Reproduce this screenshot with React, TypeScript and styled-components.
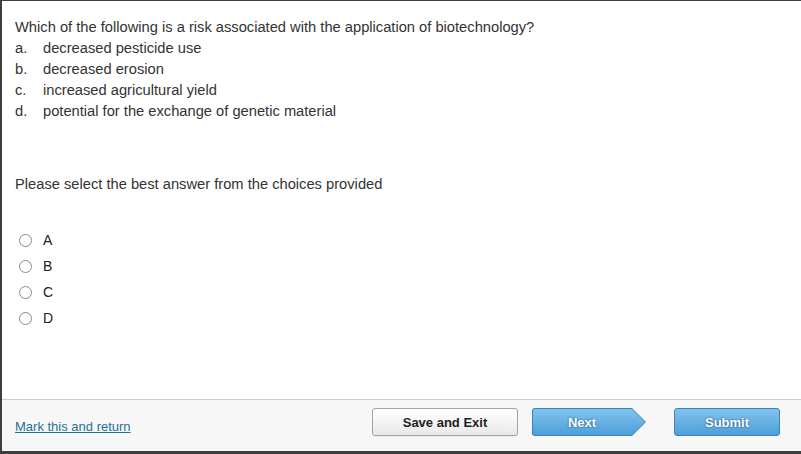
import React from "react";
import styled, { createGlobalStyle } from "styled-components";

const GlobalStyle = createGlobalStyle`
  html, body {
    margin: 0;
    padding: 0;
    background: #ffffff;
  }
  body {
    font-family: "Liberation Sans", Arial, sans-serif;
  }
`;

const Frame = styled.div`
  width: 801px;
  height: 454px;
  box-sizing: border-box;
  border-top: 1px solid #3e3e3e;
  border-left: 2px solid #3e3e3e;
  border-bottom: 3px solid #3e3e3e;
  display: flex;
  flex-direction: column;
  background: #fff;
  color: #333;
  font-size: 14.7px;
`;

const Content = styled.div`
  flex: 1;
  padding: 16px 13px 0;
`;

const Question = styled.p`
  margin: 0;
  line-height: 21px;
`;

const ChoiceList = styled.ol`
  list-style: none;
  margin: 0;
  padding: 0;
`;

const ChoiceItem = styled.li`
  display: flex;
  line-height: 21px;
`;

const ChoiceLetter = styled.span`
  width: 28px;
  flex: none;
`;

const Prompt = styled.p`
  margin: 52px 0 0;
  line-height: 21px;
`;

const RadioGroup = styled.div`
  margin-top: 32px;
  display: flex;
  flex-direction: column;
`;

const RadioRow = styled.label`
  display: flex;
  align-items: center;
  height: 26px;
  cursor: pointer;
  font-size: 14px;
`;

const RadioCircle = styled.span`
  width: 13px;
  height: 13px;
  box-sizing: border-box;
  border: 1px solid #8a8a8a;
  border-radius: 50%;
  background: #fff;
  margin-left: 4px;
  margin-right: 11px;
`;

const RadioText = styled.span`
  color: #222;
`;

const Footer = styled.div`
  height: 52px;
  box-sizing: border-box;
  border-top: 1px solid #cfcfcf;
  background: #f7f7f7;
  display: flex;
  align-items: flex-start;
  padding: 8px 21px 0 13px;
`;

const MarkLink = styled.a`
  font-size: 13px;
  color: #1f7299;
  text-decoration: underline;
  margin-top: 11px;
`;

const Actions = styled.div`
  margin-left: auto;
  display: flex;
  align-items: center;
`;

const GrayButton = styled.button`
  width: 146px;
  height: 28px;
  border: 1px solid #a3a3a3;
  border-radius: 3px;
  background: linear-gradient(#ffffff, #e9e9e9);
  font-family: "Liberation Sans", Arial, sans-serif;
  font-size: 13px;
  font-weight: bold;
  color: #222;
  padding: 0;
  box-shadow: 0 1px 0 rgba(0, 0, 0, 0.05);
`;

const ArrowOuter = styled.div`
  width: 114px;
  height: 28px;
  margin-left: 14px;
  background: #3d86bb;
  clip-path: polygon(0 0, 100px 0, 114px 14px, 100px 28px, 0 28px);
  border-radius: 3px 0 0 3px;
  padding: 1px;
  box-sizing: border-box;
`;

const ArrowInner = styled.div`
  width: 100%;
  height: 100%;
  background: linear-gradient(#82c3ee, #4d9fd8);
  clip-path: polygon(0 0, 99px 0, 112px 13px, 99px 26px, 0 26px);
  border-radius: 2px 0 0 2px;
  display: flex;
  align-items: center;
  justify-content: center;
  padding-right: 14px;
  box-sizing: border-box;
`;

const BlueLabel = styled.span`
  font-size: 13px;
  font-weight: bold;
  color: #fff;
  text-shadow: 0 0 2px rgba(0, 40, 80, 0.8);
`;

const BlueButton = styled.button`
  width: 106px;
  height: 28px;
  margin-left: 28px;
  border: 1px solid #3d86bb;
  border-radius: 3px;
  background: linear-gradient(#82c3ee, #4d9fd8);
  font-family: "Liberation Sans", Arial, sans-serif;
  padding: 0;
`;

const choices = [
  ["a.", "decreased pesticide use"],
  ["b.", "decreased erosion"],
  ["c.", "increased agricultural yield"],
  ["d.", "potential for the exchange of genetic material"],
];

export default function App() {
  return (
    <>
      <GlobalStyle />
      <Frame>
        <Content>
          <Question>
            Which of the following is a risk associated with the application of biotechnology?
          </Question>
          <ChoiceList>
            {choices.map(([letter, text]) => (
              <ChoiceItem key={letter}>
                <ChoiceLetter>{letter}</ChoiceLetter>
                <span>{text}</span>
              </ChoiceItem>
            ))}
          </ChoiceList>
          <Prompt>Please select the best answer from the choices provided</Prompt>
          <RadioGroup>
            {["A", "B", "C", "D"].map((opt) => (
              <RadioRow key={opt}>
                <RadioCircle />
                <RadioText>{opt}</RadioText>
              </RadioRow>
            ))}
          </RadioGroup>
        </Content>
        <Footer>
          <MarkLink href="#">Mark this and return</MarkLink>
          <Actions>
            <GrayButton>Save and Exit</GrayButton>
            <ArrowOuter>
              <ArrowInner>
                <BlueLabel>Next</BlueLabel>
              </ArrowInner>
            </ArrowOuter>
            <BlueButton>
              <BlueLabel>Submit</BlueLabel>
            </BlueButton>
          </Actions>
        </Footer>
      </Frame>
    </>
  );
}
